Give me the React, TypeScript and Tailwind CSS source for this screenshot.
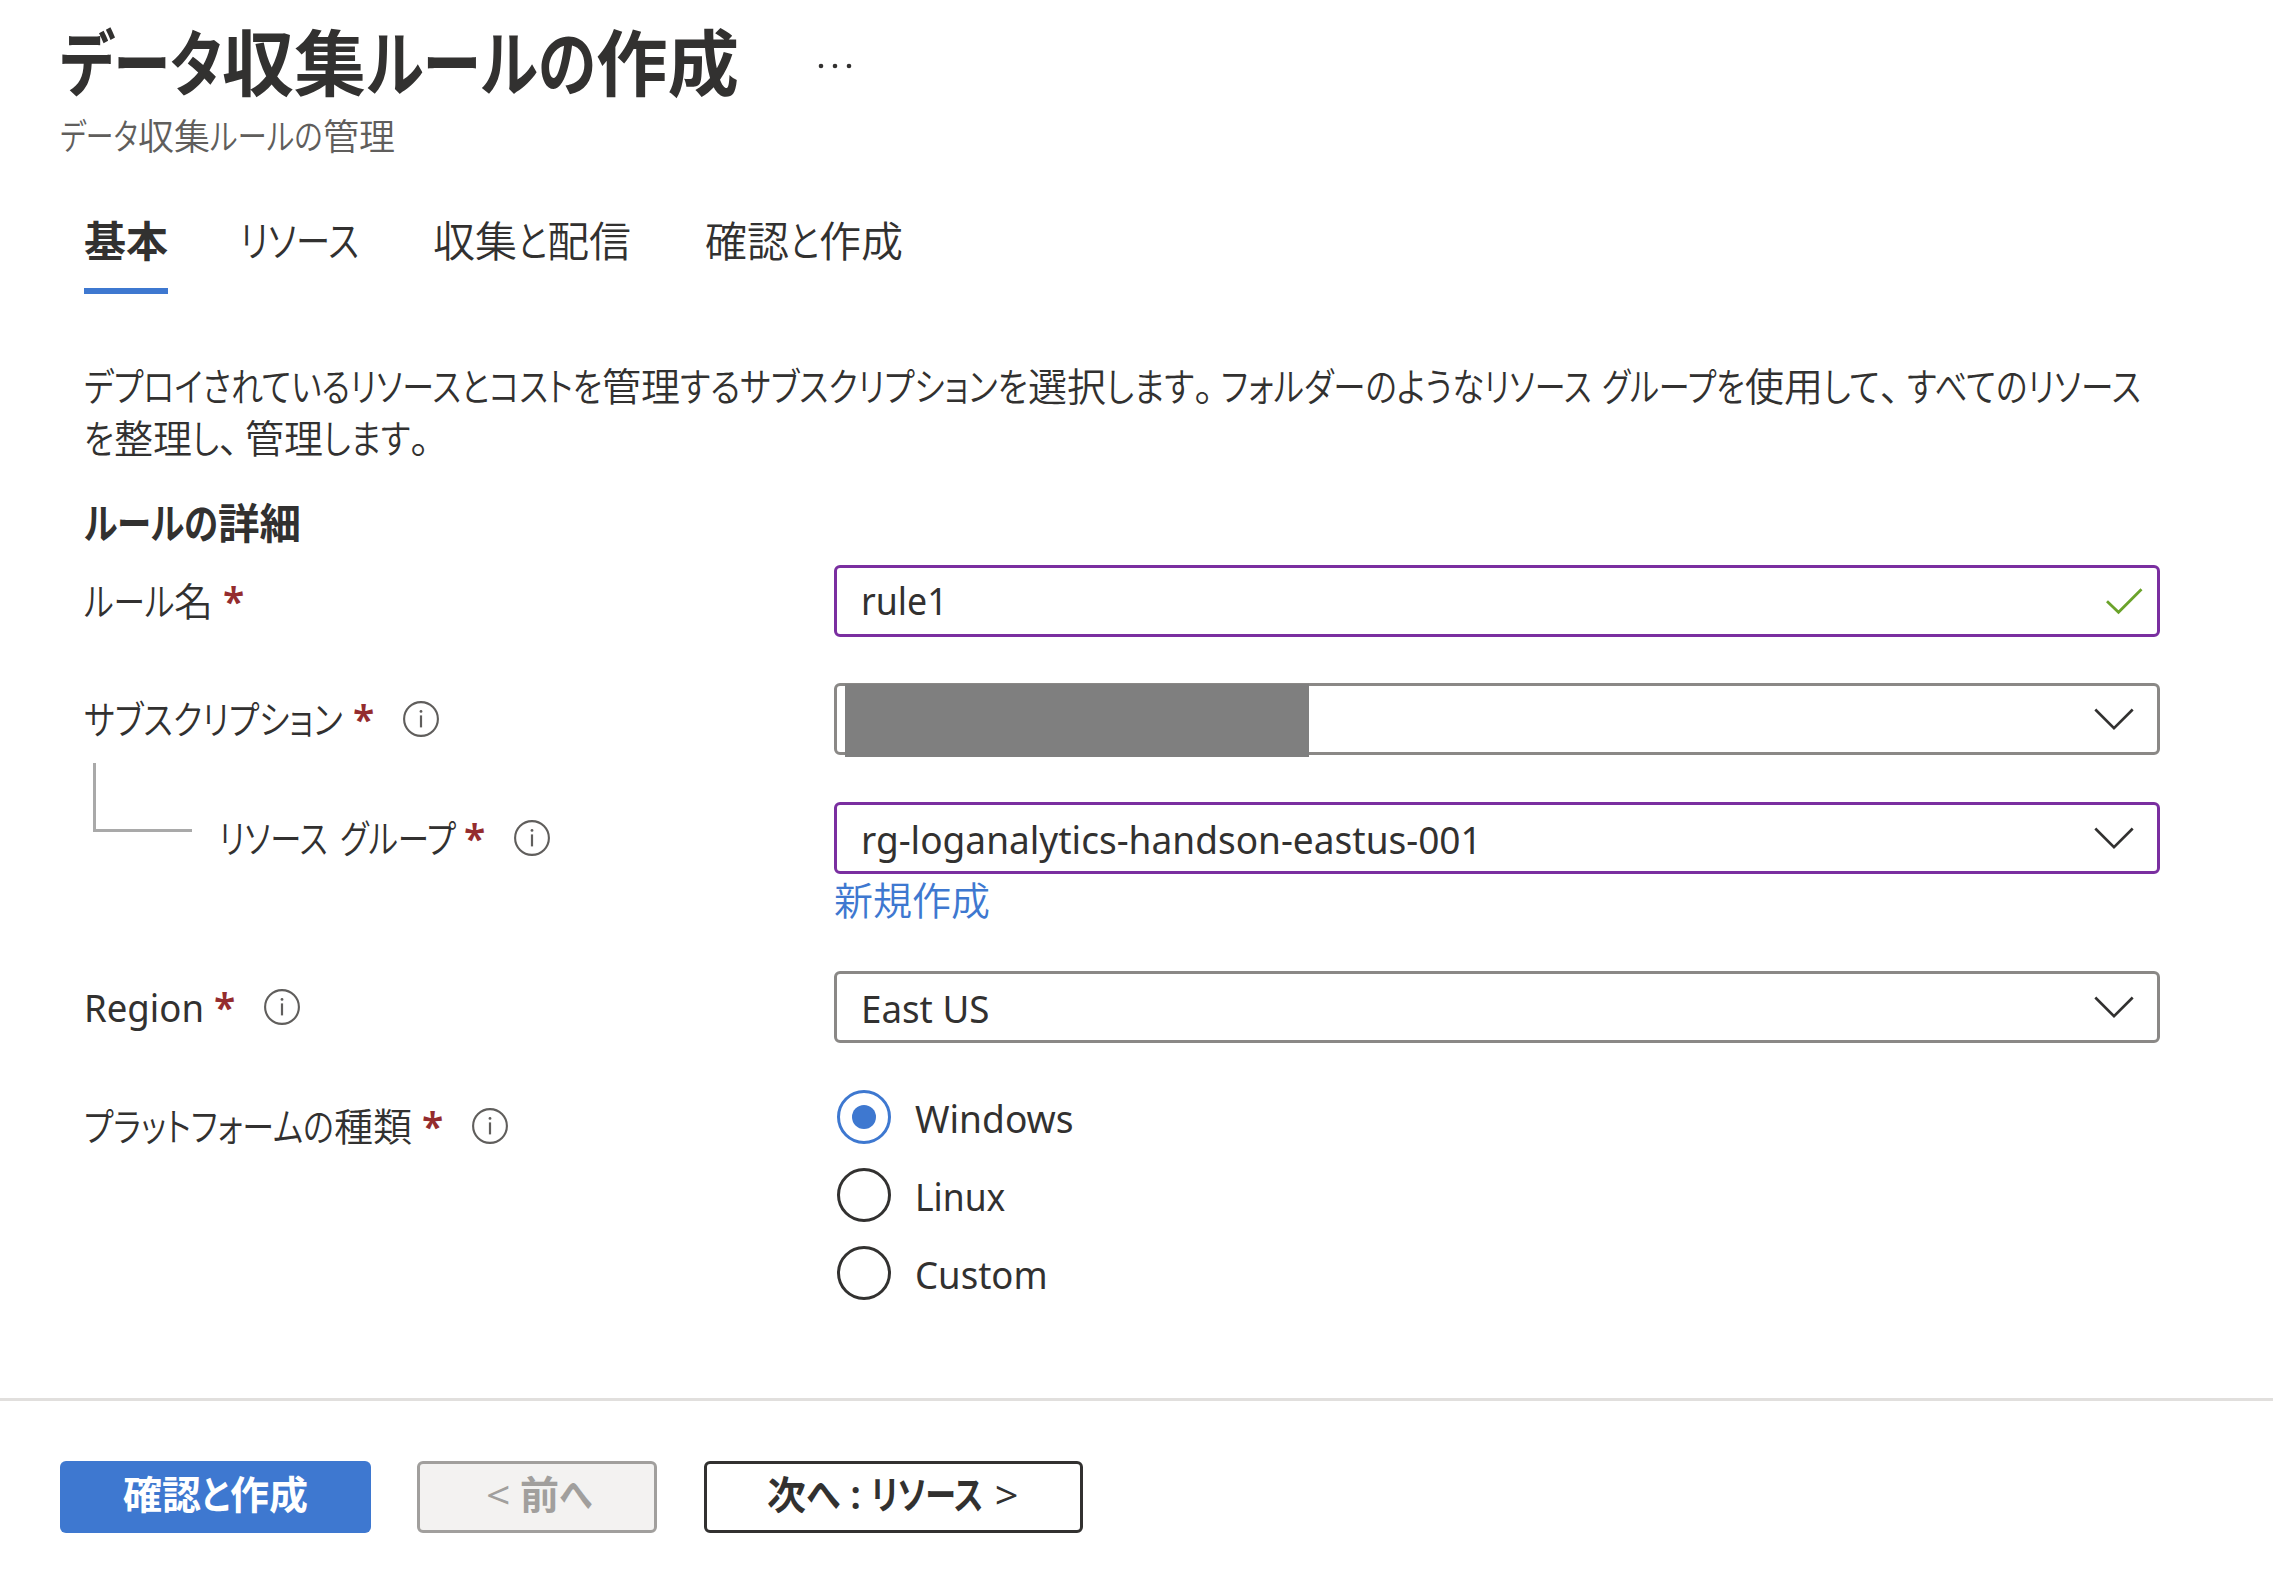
import { useLayoutEffect, useRef, useState, type ReactNode } from "react";

function Fit({ w, children }: { w: number; children: string }) {
  const inner = useRef<HTMLSpanElement>(null);
  const [scale, setScale] = useState(1);
  useLayoutEffect(() => {
    if (inner.current) setScale(w / inner.current.offsetWidth);
  }, [w, children]);
  return (
    <span className="inline-block whitespace-pre" style={{ width: w }}>
      <span ref={inner} className="inline-block origin-left" style={{ transform: `scaleX(${scale})` }}>
        {children}
      </span>
    </span>
  );
}

type Run = [string, number];

function Runs({ items }: { items: Run[] }) {
  return (
    <span className="whitespace-nowrap">
      {items.map(([text, w], i) =>
        text === "、" || text === "。" ? (
          <span key={i} className="inline-block" style={{ width: w }}>
            {text}
          </span>
        ) : (
          <Fit key={i} w={w}>
            {text}
          </Fit>
        ),
      )}
    </span>
  );
}

function InfoIcon() {
  return (
    <svg className="ml-[28px] h-9 w-9 shrink-0" viewBox="0 0 36 36" fill="none">
      <circle cx="18" cy="18" r="16.9" stroke="#605e5c" strokeWidth="2.1" />
      <circle cx="18" cy="10.4" r="1.4" fill="#605e5c" />
      <path d="M18 14.4V26.4" stroke="#605e5c" strokeWidth="2.2" />
    </svg>
  );
}

function Chevron() {
  return (
    <svg className="mr-[22.5px] h-[24px] w-[42px] shrink-0" viewBox="0 0 42 24" fill="none">
      <path d="M2.3 2.5L21 21.2L39.7 2.5" stroke="#323130" strokeWidth="2.6" />
    </svg>
  );
}

function Check() {
  return (
    <svg className="mr-[14px] h-[28px] w-[38px] shrink-0" viewBox="0 0 38 28" fill="none">
      <path d="M2 14.2L13.5 25.2L36.5 2.2" stroke="#6ba32b" strokeWidth="2.8" />
    </svg>
  );
}

function Label({ items, info = true, gap = "ml-[10px]" }: { items: Run[]; info?: boolean; gap?: string }) {
  return (
    <div className="flex h-[72px] items-center leading-[72px]">
      <Runs items={items} />
      <span className={`${gap} w-[22px] pb-px font-semibold text-[#942c2e]`}>*</span>
      {info && <InfoIcon />}
    </div>
  );
}

function Field({ border, children, icon }: { border: string; children?: ReactNode; icon: ReactNode }) {
  return (
    <div
      className={`relative flex h-[72px] w-[1326px] items-center justify-between rounded-[6px] border-[3px] pl-[24px] leading-[66px] font-normal ${border}`}
    >
      <span>{children}</span>
      {icon}
    </div>
  );
}

function Radio({ text, w, on = false }: { text: string; w: number; on?: boolean }) {
  return (
    <label className="flex h-[54px] items-center gap-[24px] pl-[3px]">
      <span
        className={`flex h-[54px] w-[54px] items-center justify-center rounded-full border-[3px] ${on ? "border-[#3e78d0]" : "border-[#323130]"}`}
      >
        {on && <span className="h-6 w-6 rounded-full bg-[#3e78d0]" />}
      </span>
      <span className="pt-[1px] leading-[54px] font-normal">
        <Fit w={w}>{text}</Fit>
      </span>
    </label>
  );
}

export default function App() {
  return (
    <div className="flex h-[1575px] w-[2273px] flex-col overflow-hidden bg-white font-['Noto_Sans','Noto_Sans_CJK_JP',sans-serif] text-[39px] font-[350] text-[#323130] [font-feature-settings:'palt']">
      <header className="pt-[20px] pl-[60px]">
        <div className="flex h-[84px] items-center text-[72px] leading-[84px]">
          <h1 className="font-semibold">
            <Runs items={[["データ", 162], ["収集", 144], ["ルールの", 230], ["作成", 143]]} />
          </h1>
          <svg className="mt-[8px] ml-[78px] h-[8px] w-[38px]" viewBox="0 0 38 8" fill="#323130">
            <circle cx="4" cy="4" r="2.3" />
            <circle cx="18" cy="4" r="2.3" />
            <circle cx="32" cy="4" r="2.3" />
          </svg>
        </div>
        <p className="mt-[9px] text-[36px] leading-[48px] text-[#605e5c]">
          <Runs items={[["データ", 78], ["収集", 72], ["ルールの", 113], ["管理", 72]]} />
        </p>
      </header>

      <nav className="mt-[50px] flex h-[83px] gap-[72px] pl-[84px] text-[42px] leading-[60px]">
        <span className="border-b-[6px] border-[#3e78d0] font-semibold">
          <Runs items={[["基本", 84]]} />
        </span>
        <span className="w-[121px]">
          <Runs items={[["リソース", 119]]} />
        </span>
        <span className="mr-[2px]">
          <Runs items={[["収集", 84], ["と", 30], ["配信", 84]]} />
        </span>
        <span>
          <Runs items={[["確認", 84], ["と", 30], ["作成", 84]]} />
        </span>
      </nav>

      <main className="flex-1 px-[84px] pt-[66px]">
        <p className="leading-[52px]">
          <Runs
            items={[
              ["デプロイされているリソースとコストを", 518],
              ["管理", 78],
              ["する", 60],
              ["サブスクリプションを", 288],
              ["選択", 78],
              ["します", 88],
              ["。", 27],
              ["フォルダーのような", 263],
              ["リソース", 108],
              [" ", 10],
              ["グループを", 143],
              ["使用", 78],
              ["して", 57],
              ["、", 27],
              ["すべてのリソース", 234],
            ]}
          />
          <br />
          <Runs
            items={[["を", 30], ["整理", 78], ["し", 27], ["、", 26], ["管理", 78], ["します", 87], ["。", 27]]}
          />
        </p>

        <h2 className="mt-[29px] text-[42px] leading-[60px] font-semibold">
          <Runs items={[["ルールの", 134], ["詳細", 83]]} />
        </h2>

        <div className="mt-[12px] grid grid-cols-[750px_1326px]">
          <Label items={[["ルール", 90], ["名", 39]]} info={false} />
          <Field border="border-[#7a2fa0]" icon={<Check />}>
            <span className="inline-block pb-[3px]">
              <Fit w={87}>rule1</Fit>
            </span>
          </Field>
        </div>

        <div className="mt-[46px] grid grid-cols-[750px_1326px]">
          <Label items={[["サブスクリプション", 259]]} />
          <Field border="border-[#8a8886]" icon={<Chevron />}>
            <span className="absolute top-[-2px] left-[8px] h-[73px] w-[464px] bg-[#7f7f7f]" />
          </Field>
        </div>

        <div className="mt-[47px] grid grid-cols-[750px_1326px]">
          <div className="flex">
            <span className="mt-[-39px] ml-[9px] h-[69px] w-[99px] border-b-[3px] border-l-[3px] border-[#a9a9a9]" />
            <div className="pl-[27px]">
              <Label items={[["リソース", 109], [" ", 12], ["グループ", 116]]} gap="ml-[8px]" />
            </div>
          </div>
          <div>
            <Field border="border-[#7a2fa0]" icon={<Chevron />}>
              <span className="inline-block pt-[1px]">
                <Fit w={621}>rg-loganalytics-handson-eastus-001</Fit>
              </span>
            </Field>
            <a className="block leading-[52px] text-[#3e78d0]">
              <Runs items={[["新規作成", 156]]} />
            </a>
          </div>
        </div>

        <div className="mt-[45px] grid grid-cols-[750px_1326px]">
          <div className="font-normal">
            <Label items={[["Region", 120]]} />
          </div>
          <Field border="border-[#8a8886]" icon={<Chevron />}>
            <span className="inline-block pt-[1px]">
              <Fit w={128}>East US</Fit>
            </span>
          </Field>
        </div>

        <div className="mt-[47px] grid grid-cols-[750px_1326px]">
          <Label items={[["プラットフォームの", 250], ["種類", 78]]} />
          <div className="flex flex-col gap-[24px]">
            <Radio text="Windows" w={159} on />
            <Radio text="Linux" w={90} />
            <Radio text="Custom" w={133} />
          </div>
        </div>
      </main>

      <footer className="flex h-[177px] border-t-[3px] border-[#e1dfdd] pt-[60px] pl-[60px] leading-[60px] font-semibold">
        <button className="flex h-[72px] w-[311px] justify-center rounded-[6px] bg-[#3e78d0] pt-[3px] text-white">
          <Runs items={[["確認", 78], ["と", 29], ["作成", 78]]} />
        </button>
        <button className="ml-[46px] flex h-[72px] w-[240px] justify-center rounded-[6px] border-[3px] border-[#a19f9d] bg-[#f3f2f1] pl-[3px] text-[#a19f9d]">
          <span className="font-normal">
            <Fit w={35}>{"< "}</Fit>
          </span>
          <Runs items={[["前", 39], ["へ", 33]]} />
        </button>
        <button className="ml-[47px] flex h-[72px] w-[379px] justify-center rounded-[6px] border-[3px] border-[#323130] bg-white pr-[3px]">
          <Runs items={[["次", 39], ["へ", 34], [" : ", 31], ["リソース", 112]]} />
          <span className="font-normal">
            <Fit w={34}>{" >"}</Fit>
          </span>
        </button>
      </footer>
    </div>
  );
}
